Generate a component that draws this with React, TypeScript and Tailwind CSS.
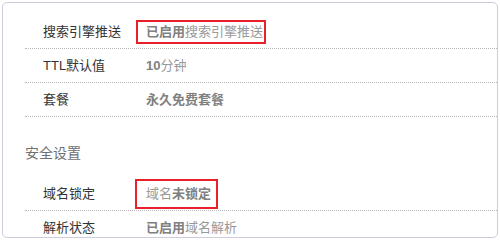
import React from 'react';

type Row = {
  label: React.ReactNode;
  value: React.ReactNode;
  box?: 'push' | 'lock';
};

const font = { fontFamily: '"Liberation Sans", "Noto Sans CJK SC", sans-serif' };

function Bold({ children }: { children: React.ReactNode }) {
  return <b className="font-bold text-[#808080]">{children}</b>;
}

function InfoRow({ row, last }: { row: Row; last?: boolean }) {
  return (
    <div
      className={
        'flex h-[34px] items-center pl-[18px] ' +
        (last ? '' : 'border-b border-dotted border-[#b8b8b8]')
      }
    >
      <span className="w-[103px] shrink-0 text-[13px] leading-[16px] text-[#333]">{row.label}</span>
      <span className="relative inline-block text-[13px] leading-[16px] text-[#999]">
        {row.value}
        {/* annotation boxes */}
        {row.box === 'push' && (
          <span className="absolute -top-[4px] -bottom-[4px] -left-[10px] -right-[3px] border-2 border-[#e8202a]" />
        )}
        {row.box === 'lock' && (
          <span className="absolute -top-[7px] -bottom-[7px] -left-[11px] -right-[7px] border-2 border-[#e8202a]" />
        )}
      </span>
    </div>
  );
}

export default function App() {
  const general: Row[] = [
    {
      label: '搜索引擎推送',
      value: (
        <>
          <Bold>已启用</Bold>搜索引擎推送
        </>
      ),
      box: 'push',
    },
    {
      label: 'TTL默认值',
      value: (
        <>
          <Bold>10</Bold>分钟
        </>
      ),
    },
    { label: '套餐', value: <Bold>永久免费套餐</Bold> },
  ];

  const security: Row[] = [
    {
      label: '域名锁定',
      value: (
        <>
          域名<Bold>未锁定</Bold>
        </>
      ),
      box: 'lock',
    },
    {
      label: '解析状态',
      value: (
        <>
          <Bold>已启用</Bold>域名解析
        </>
      ),
    },
  ];

  return (
    <div className="h-[240px] w-[500px] bg-white p-[2px]" style={font}>
      <div className="h-[236px] w-[496px] overflow-hidden rounded-[5px] border border-[#cfcbdc] bg-white pl-[22px] pt-[12px]">
        {general.map((row, i) => (
          <InfoRow key={i} row={row} />
        ))}

        <div className="mb-[14px] mt-[26px] h-[20px] text-[14px] leading-[20px] text-[#6f6f6f]">安全设置</div>

        {security.map((row, i) => (
          <InfoRow key={i} row={row} last={i === security.length - 1} />
        ))}
      </div>
    </div>
  );
}
